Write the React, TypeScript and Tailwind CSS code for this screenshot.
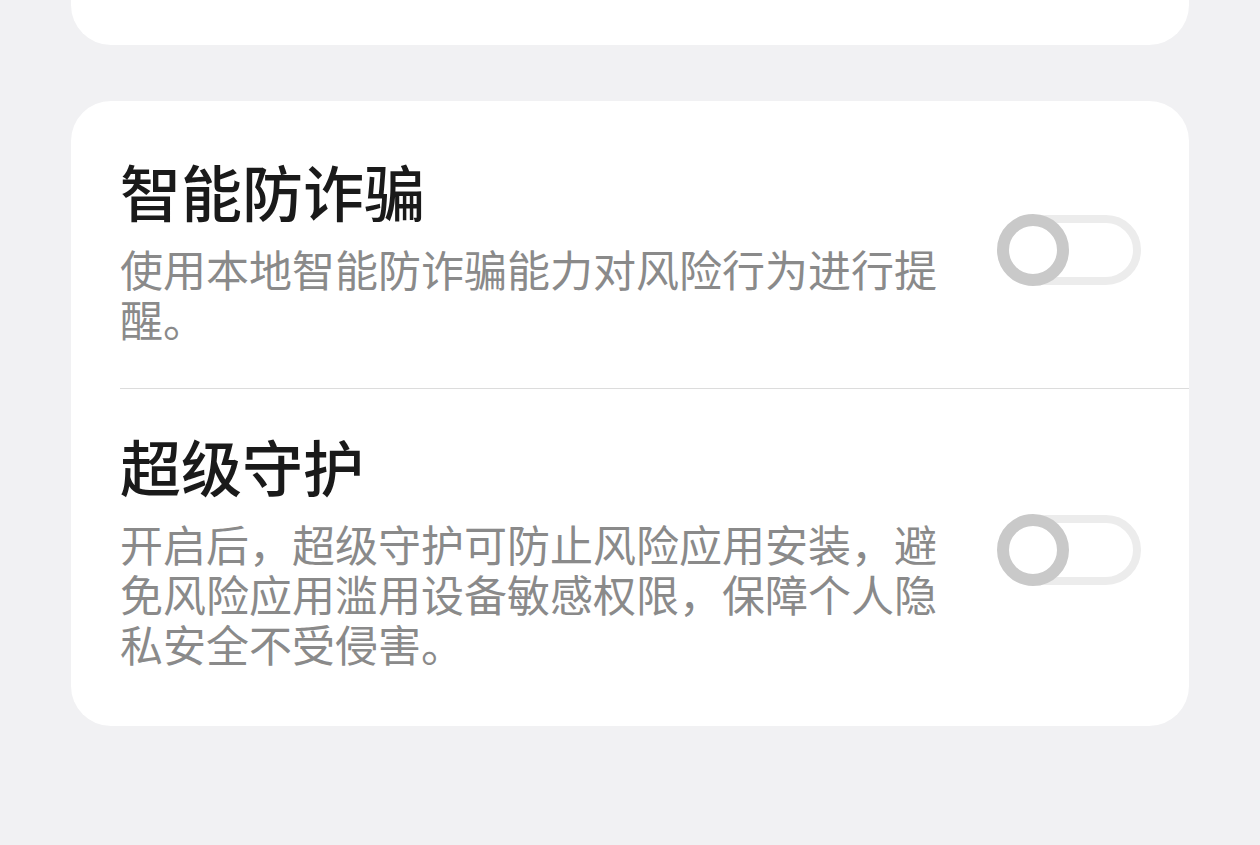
const rows = [
  {
    title: "智能防诈骗",
    desc: "使用本地智能防诈骗能力对风险行为进行提醒。",
  },
  {
    title: "超级守护",
    desc: "开启后，超级守护可防止风险应用安装，避免风险应用滥用设备敏感权限，保障个人隐私安全不受侵害。",
  },
];

function Toggle() {
  return (
    <div className="relative w-[144px] h-[72px] shrink-0">
      <div className="absolute top-[1px] bottom-[1px] left-[2px] right-0 rounded-full border-[8px] border-[#ececec] bg-white" />
      <div className="absolute left-0 top-0 w-[72px] h-[72px] rounded-full border-[12px] border-[#c9c9c9] bg-white" />
    </div>
  );
}

export default function App() {
  return (
    <div
      className="min-h-screen bg-[#f1f1f3] px-[71px]"
      style={{ fontFamily: '"Noto Sans CJK SC", "Noto Sans", sans-serif' }}
    >
      <div className="h-[45px] bg-white rounded-b-[40px]" />
      <div className="mt-[56px] bg-white rounded-[40px] py-[13px]">
        {rows.map((row, i) => (
          <div key={row.title} className="pl-[49px]">
            <div
              className={
                "flex items-center gap-[50px] pr-[48px] pt-[43px] pb-[45px] " +
                (i < rows.length - 1 ? "border-b border-[#dcdcdc]" : "")
              }
            >
              <div className="flex-1 min-w-0">
                <div className="text-[61px] leading-[68px] font-medium text-[#1a1a1a]">
                  {row.title}
                </div>
                <div className="mt-[18px] text-[43px] leading-[50px] text-[#8a8a8a]">
                  {row.desc}
                </div>
              </div>
              <Toggle />
            </div>
          </div>
        ))}
      </div>
    </div>
  );
}
